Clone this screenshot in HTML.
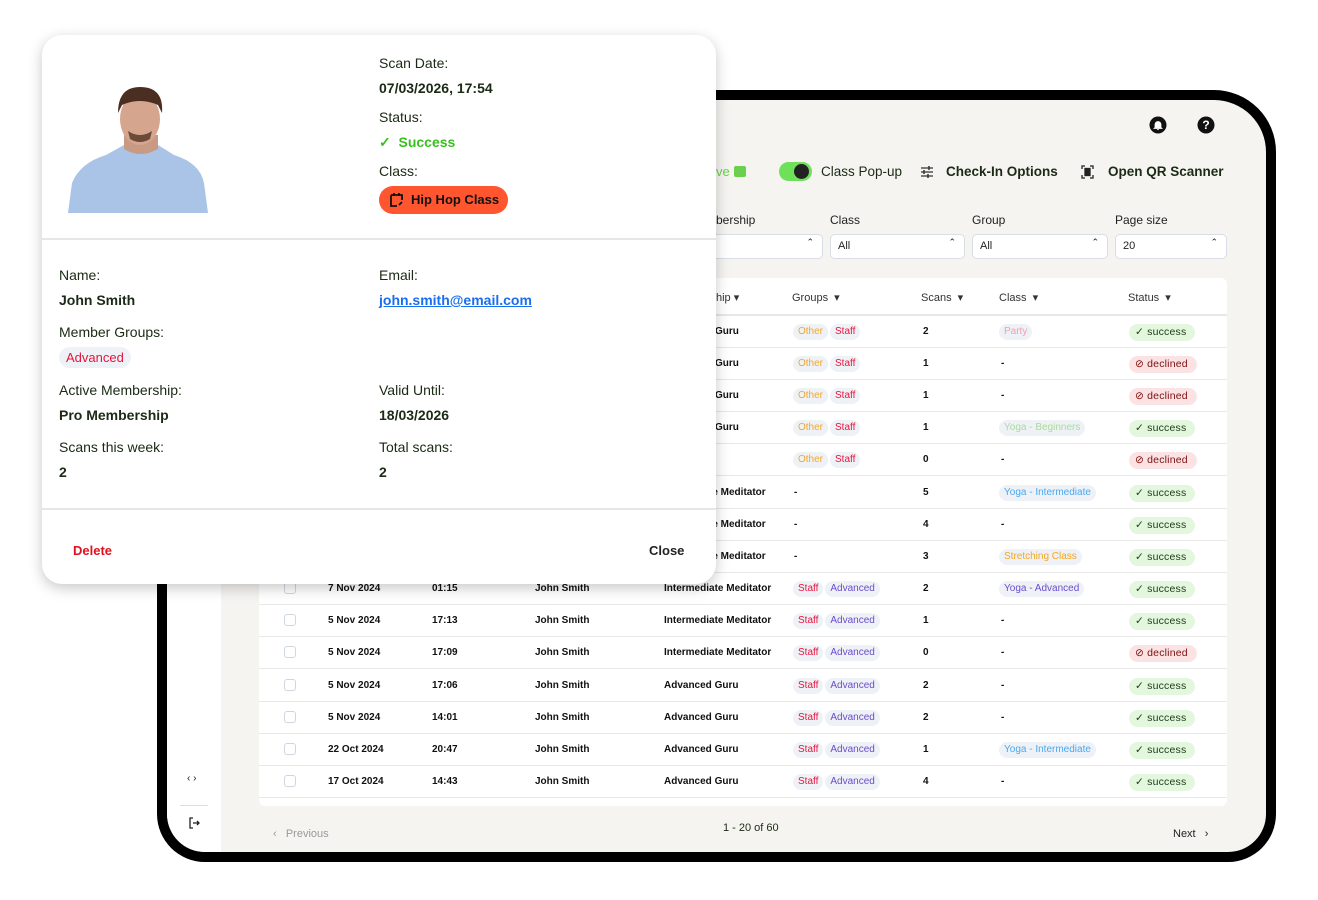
<!DOCTYPE html>
<html><head><meta charset="utf-8"><style>
*{box-sizing:border-box;margin:0;padding:0}
body{width:1318px;height:900px;background:#fff;position:relative;overflow:hidden;font-family:"Liberation Sans",Arial,sans-serif;color:#111}
.frame{position:absolute;left:157px;top:90px;width:1119px;height:772px;background:#000;border-radius:62px 62px 48px 48px}
.inner{position:absolute;left:10px;top:10px;width:1099px;height:752px;background:#f5f4f1;border-radius:52px 52px 38px 38px;overflow:hidden}
.side{position:absolute;left:0;top:0;width:54px;height:100%;background:#fff}
.a{position:absolute;white-space:nowrap}
.card{position:absolute;left:259px;top:278px;width:968px;height:528px;background:#fff;border-radius:6px}
.row{position:absolute;left:259px;width:968px;height:32px;border-bottom:1.5px solid #e8e8e8;font-size:10px;font-weight:bold}
.row span{position:absolute;top:10px;white-space:nowrap}
.cb{position:absolute;left:25px;top:9px;width:12px;height:12px;border:1px solid #cfd6df;border-radius:3px}
.b{display:inline-block;height:16px;line-height:16px;padding:0 5px;border-radius:8px;background:#eef2f7;font-weight:normal;font-size:10px;margin-right:2px}
.st{position:absolute;left:870px;top:8px;height:17px;line-height:17px;border-radius:9px;font-size:10.5px;font-weight:normal;padding:0 9px 0 6px;letter-spacing:.2px}
.ok{background:#e3f7df;color:#1b3a12}
.no{background:#fbe3e3;color:#7a1010}
.sel{position:absolute;top:234px;height:25px;background:#fff;border:1px solid #d8dde6;border-radius:5px;font-size:11px;padding:5px 7px;color:#222}
.sel:after{content:"⌃";position:absolute;right:8px;top:2px;font-size:9px}
.lbl{position:absolute;top:213px;font-size:12px;color:#222}
.th{position:absolute;top:291px;font-size:11px;color:#333}
.modal{position:absolute;left:42px;top:35px;width:674px;height:549px;background:#fff;border-radius:20px;box-shadow:0 4px 14px rgba(0,0,0,.22)}
.m{position:absolute;white-space:nowrap;color:#1b2a14;font-size:14px}
.mb{font-weight:bold;font-size:14px}
</style></head><body>
<div class="frame"><div class="inner">
<div class="side">
<div class="a" style="left:20px;top:673px;font-size:10px">‹ ›</div>
<div style="position:absolute;left:13px;top:705px;width:28px;height:1px;background:#ddd"></div>
<svg class="a" style="left:20px;top:716px" width="14" height="14" viewBox="0 0 14 14" fill="none" stroke="#222" stroke-width="1.3"><path d="M6 2H3v10h3M6 7h6M10 5l2 2-2 2"/></svg>
</div>
</div></div>

<svg class="a" style="left:1149px;top:116px" width="18" height="18" viewBox="0 0 18 18"><circle cx="9" cy="9" r="8.5" fill="#111"/><path d="M6 11.5V8.5a3 3 0 016 0v3l1 1H5z M8 13.5h2" fill="#fff" stroke="#fff" stroke-width=".8"/></svg>
<svg class="a" style="left:1197px;top:116px" width="18" height="18" viewBox="0 0 18 18"><circle cx="9" cy="9" r="8.5" fill="#111"/><text x="9" y="13" font-size="12" font-weight="bold" text-anchor="middle" fill="#fff" font-family="Liberation Sans">?</text></svg>
<div class="a" style="left:716px;top:164px;font-size:13px;color:#6bd04b">ve</div>
<div class="a" style="left:734px;top:166px;width:12px;height:11px;background:#6bd04b;border-radius:2px"></div>
<div class="a" style="left:779px;top:162px;width:33px;height:19px;background:#6fe05a;border-radius:10px"></div>
<div class="a" style="left:794px;top:164px;width:15px;height:15px;background:#222;border-radius:50%"></div>
<div class="a" style="left:821px;top:164px;font-size:13.5px;color:#1b2a14">Class Pop-up</div>
<svg class="a" style="left:920px;top:165px" width="14" height="14" viewBox="0 0 14 14" stroke="#333" stroke-width="1.2"><path d="M1 3h12M1 7h12M1 11h12"/><path d="M9 1v4M4 5v4M8 9v4" stroke-width="1.5"/></svg>
<div class="a" style="left:946px;top:164px;font-size:13.5px;font-weight:bold;color:#1b2a14">Check-In Options</div>
<svg class="a" style="left:1081px;top:165px" width="13" height="14" viewBox="0 0 13 14" fill="none" stroke="#222" stroke-width="1.3"><path d="M1 4V1h3M9 1h3v3M12 10v3H9M4 13H1v-3"/><rect x="4" y="3.5" width="5" height="7" fill="#222"/></svg>
<div class="a" style="left:1108px;top:164px;font-size:13.5px;font-weight:bold;color:#1b2a14">Open QR Scanner</div>

<div class="lbl" style="left:716px">bership</div>
<div class="lbl" style="left:830px">Class</div>
<div class="lbl" style="left:972px">Group</div>
<div class="lbl" style="left:1115px">Page size</div>
<div class="sel" style="left:700px;width:123px"></div>
<div class="sel" style="left:830px;width:135px">All</div>
<div class="sel" style="left:972px;width:136px">All</div>
<div class="sel" style="left:1115px;width:112px">20</div>

<div class="card"></div>
<div style="position:absolute;left:259px;top:314px;width:968px;height:1.5px;background:#e8e8e8"></div>
<div class="th" style="left:716px">hip ▾</div>
<div class="th" style="left:792px">Groups &nbsp;▾</div>
<div class="th" style="left:921px">Scans &nbsp;▾</div>
<div class="th" style="left:999px">Class &nbsp;▾</div>
<div class="th" style="left:1128px">Status &nbsp;▾</div>

<div class="row" style="top:316px"><div class="cb"></div><span style="left:69px">7 Nov 2024</span><span style="left:173px">01:15</span><span style="left:276px">John Smith</span><span style="left:456px">Guru</span><span style="left:534px;top:8px"><i class="b" style="color:#f5a623;font-style:normal">Other</i><i class="b" style="color:#e8143c;font-style:normal">Staff</i></span><span style="left:664px">2</span><span style="left:740px;top:8px"><i class="b" style="color:#f0a0b0;font-style:normal">Party</i></span><div class="st ok">✓ success</div></div>
<div class="row" style="top:348px"><div class="cb"></div><span style="left:456px">Guru</span><span style="left:534px;top:8px"><i class="b" style="color:#f5a623;font-style:normal">Other</i><i class="b" style="color:#e8143c;font-style:normal">Staff</i></span><span style="left:664px">1</span><span style="left:742px">-</span><div class="st no">⊘ declined</div></div>
<div class="row" style="top:380px"><div class="cb"></div><span style="left:456px">Guru</span><span style="left:534px;top:8px"><i class="b" style="color:#f5a623;font-style:normal">Other</i><i class="b" style="color:#e8143c;font-style:normal">Staff</i></span><span style="left:664px">1</span><span style="left:742px">-</span><div class="st no">⊘ declined</div></div>
<div class="row" style="top:412px"><div class="cb"></div><span style="left:456px">Guru</span><span style="left:534px;top:8px"><i class="b" style="color:#f5a623;font-style:normal">Other</i><i class="b" style="color:#e8143c;font-style:normal">Staff</i></span><span style="left:664px">1</span><span style="left:740px;top:8px"><i class="b" style="color:#a8dc98;font-style:normal">Yoga - Beginners</i></span><div class="st ok">✓ success</div></div>
<div class="row" style="top:444px"><div class="cb"></div><span style="left:534px;top:8px"><i class="b" style="color:#f5a623;font-style:normal">Other</i><i class="b" style="color:#e8143c;font-style:normal">Staff</i></span><span style="left:664px">0</span><span style="left:742px">-</span><div class="st no">⊘ declined</div></div>
<div class="row" style="top:477px"><div class="cb"></div><span style="left:450px">te Meditator</span><span style="left:535px">-</span><span style="left:664px">5</span><span style="left:740px;top:8px"><i class="b" style="color:#4aa8f0;font-style:normal">Yoga - Intermediate</i></span><div class="st ok">✓ success</div></div>
<div class="row" style="top:509px"><div class="cb"></div><span style="left:450px">te Meditator</span><span style="left:535px">-</span><span style="left:664px">4</span><span style="left:742px">-</span><div class="st ok">✓ success</div></div>
<div class="row" style="top:541px"><div class="cb"></div><span style="left:450px">te Meditator</span><span style="left:535px">-</span><span style="left:664px">3</span><span style="left:740px;top:8px"><i class="b" style="color:#f5a623;font-style:normal">Stretching Class</i></span><div class="st ok">✓ success</div></div>
<div class="row" style="top:573px"><div class="cb"></div><span style="left:69px">7 Nov 2024</span><span style="left:173px">01:15</span><span style="left:276px">John Smith</span><span style="left:405px">Intermediate Meditator</span><span style="left:534px;top:8px"><i class="b" style="color:#e8143c;font-style:normal">Staff</i><i class="b" style="color:#6a4ccc;font-style:normal">Advanced</i></span><span style="left:664px">2</span><span style="left:740px;top:8px"><i class="b" style="color:#6a4ccc;font-style:normal">Yoga - Advanced</i></span><div class="st ok">✓ success</div></div>
<div class="row" style="top:605px"><div class="cb"></div><span style="left:69px">5 Nov 2024</span><span style="left:173px">17:13</span><span style="left:276px">John Smith</span><span style="left:405px">Intermediate Meditator</span><span style="left:534px;top:8px"><i class="b" style="color:#e8143c;font-style:normal">Staff</i><i class="b" style="color:#6a4ccc;font-style:normal">Advanced</i></span><span style="left:664px">1</span><span style="left:742px">-</span><div class="st ok">✓ success</div></div>
<div class="row" style="top:637px"><div class="cb"></div><span style="left:69px">5 Nov 2024</span><span style="left:173px">17:09</span><span style="left:276px">John Smith</span><span style="left:405px">Intermediate Meditator</span><span style="left:534px;top:8px"><i class="b" style="color:#e8143c;font-style:normal">Staff</i><i class="b" style="color:#6a4ccc;font-style:normal">Advanced</i></span><span style="left:664px">0</span><span style="left:742px">-</span><div class="st no">⊘ declined</div></div>
<div class="row" style="top:670px"><div class="cb"></div><span style="left:69px">5 Nov 2024</span><span style="left:173px">17:06</span><span style="left:276px">John Smith</span><span style="left:405px">Advanced Guru</span><span style="left:534px;top:8px"><i class="b" style="color:#e8143c;font-style:normal">Staff</i><i class="b" style="color:#6a4ccc;font-style:normal">Advanced</i></span><span style="left:664px">2</span><span style="left:742px">-</span><div class="st ok">✓ success</div></div>
<div class="row" style="top:702px"><div class="cb"></div><span style="left:69px">5 Nov 2024</span><span style="left:173px">14:01</span><span style="left:276px">John Smith</span><span style="left:405px">Advanced Guru</span><span style="left:534px;top:8px"><i class="b" style="color:#e8143c;font-style:normal">Staff</i><i class="b" style="color:#6a4ccc;font-style:normal">Advanced</i></span><span style="left:664px">2</span><span style="left:742px">-</span><div class="st ok">✓ success</div></div>
<div class="row" style="top:734px"><div class="cb"></div><span style="left:69px">22 Oct 2024</span><span style="left:173px">20:47</span><span style="left:276px">John Smith</span><span style="left:405px">Advanced Guru</span><span style="left:534px;top:8px"><i class="b" style="color:#e8143c;font-style:normal">Staff</i><i class="b" style="color:#6a4ccc;font-style:normal">Advanced</i></span><span style="left:664px">1</span><span style="left:740px;top:8px"><i class="b" style="color:#4aa8f0;font-style:normal">Yoga - Intermediate</i></span><div class="st ok">✓ success</div></div>
<div class="row" style="top:766px"><div class="cb"></div><span style="left:69px">17 Oct 2024</span><span style="left:173px">14:43</span><span style="left:276px">John Smith</span><span style="left:405px">Advanced Guru</span><span style="left:534px;top:8px"><i class="b" style="color:#e8143c;font-style:normal">Staff</i><i class="b" style="color:#6a4ccc;font-style:normal">Advanced</i></span><span style="left:664px">4</span><span style="left:742px">-</span><div class="st ok">✓ success</div></div>

<div class="a" style="left:273px;top:828px;font-size:11px;color:#999">‹ &nbsp;&nbsp;Previous</div>
<div class="a" style="left:723px;top:822px;font-size:11px;color:#1b2a14">1 - 20 of 60</div>
<div class="a" style="left:1173px;top:828px;font-size:11px;color:#222">Next &nbsp;&nbsp;›</div>

<div class="modal">
<svg class="a" style="left:24px;top:48px" width="144" height="132" viewBox="0 0 144 132">
<path d="M2 130 L6 100 Q14 80 40 72 L58 62 L92 62 L108 72 Q134 80 138 100 L142 130 Z" fill="#a9c4e6"/>
<path d="M58 52 L58 66 Q74 76 92 66 L92 52 Z" fill="#c89a84"/>
<ellipse cx="74" cy="36" rx="20" ry="26" fill="#d6a58e"/>
<path d="M52 30 Q52 4 74 4 Q98 4 96 30 L92 22 Q74 14 56 22 Z" fill="#4a2e22"/>
<path d="M62 48 Q74 56 86 48 L84 56 Q74 62 64 56Z" fill="#6b4a3a"/>
</svg>
<div class="m" style="left:337px;top:20px">Scan Date:</div>
<div class="m mb" style="left:337px;top:45px">07/03/2026, 17:54</div>
<div class="m" style="left:337px;top:74px">Status:</div>
<div class="m" style="left:337px;top:99px;color:#39c01f;font-weight:bold">✓&nbsp; Success</div>
<div class="m" style="left:337px;top:128px">Class:</div>
<div class="a" style="left:337px;top:151px;width:129px;height:28px;background:#ff5630;border-radius:14px;font-size:13px;font-weight:bold;color:#111;padding:6px 0 0 32px">Hip Hop Class</div>
<svg class="a" style="left:348px;top:157px" width="13" height="15" viewBox="0 0 13 15" fill="none" stroke="#111" stroke-width="1.8"><path d="M1 3h11v5M1 3v11h6M4 1v3M9 1v3"/><path d="M9 13l3-3" /></svg>
<div style="position:absolute;left:0;top:203px;width:674px;height:1.5px;background:#e6e6e6"></div>
<div class="m" style="left:17px;top:232px">Name:</div>
<div class="m mb" style="left:17px;top:257px">John Smith</div>
<div class="m" style="left:337px;top:232px">Email:</div>
<div class="m mb" style="left:337px;top:257px;color:#1a6ff0;text-decoration:underline">john.smith@email.com</div>
<div class="m" style="left:17px;top:289px">Member Groups:</div>
<div class="a" style="left:17px;top:312px;height:21px;line-height:21px;padding:0 7px;border-radius:11px;background:#eef2f7;color:#e8143c;font-size:13px">Advanced</div>
<div class="m" style="left:17px;top:347px">Active Membership:</div>
<div class="m mb" style="left:17px;top:372px">Pro Membership</div>
<div class="m" style="left:337px;top:347px">Valid Until:</div>
<div class="m mb" style="left:337px;top:372px">18/03/2026</div>
<div class="m" style="left:17px;top:404px">Scans this week:</div>
<div class="m mb" style="left:17px;top:429px">2</div>
<div class="m" style="left:337px;top:404px">Total scans:</div>
<div class="m mb" style="left:337px;top:429px">2</div>
<div style="position:absolute;left:0;top:473px;width:674px;height:1.5px;background:#e6e6e6"></div>
<div class="m" style="left:31px;top:508px;color:#e0101e;font-weight:bold;font-size:13px">Delete</div>
<div class="m" style="left:607px;top:508px;color:#222;font-weight:bold;font-size:13px">Close</div>
</div>
</body></html>
